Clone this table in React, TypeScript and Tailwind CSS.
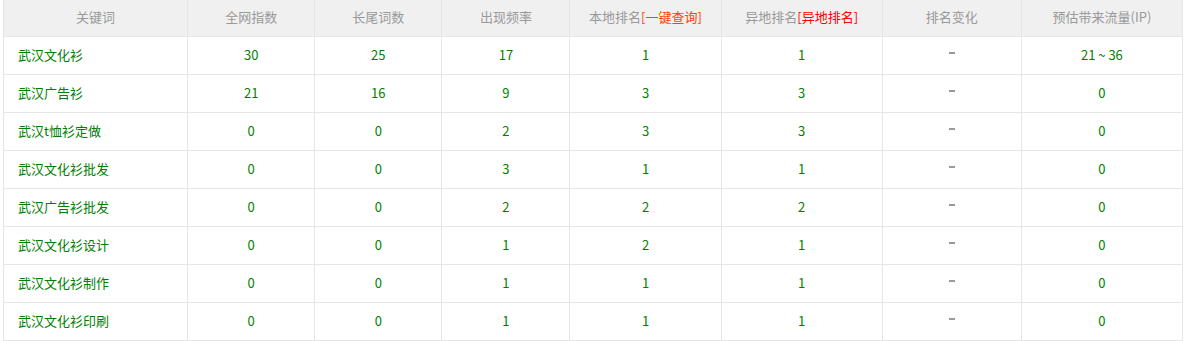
import React from "react";

const rows: [string, string, string, string, string, string, string][] = [
  ["武汉文化衫", "30", "25", "17", "1", "1", "21 ~ 36"],
  ["武汉广告衫", "21", "16", "9", "3", "3", "0"],
  ["武汉t恤衫定做", "0", "0", "2", "3", "3", "0"],
  ["武汉文化衫批发", "0", "0", "3", "1", "1", "0"],
  ["武汉广告衫批发", "0", "0", "2", "2", "2", "0"],
  ["武汉文化衫设计", "0", "0", "1", "2", "1", "0"],
  ["武汉文化衫制作", "0", "0", "1", "1", "1", "0"],
  ["武汉文化衫印刷", "0", "0", "1", "1", "1", "0"],
];

const widths = [185, 127, 127, 128, 151, 161, 139, 161];

export default function App() {
  return (
    <div
      className="bg-white w-[1184px] h-[341px] pl-[3px]"
      style={{ fontFamily: '"Noto Sans CJK SC", "Noto Sans", sans-serif' }}
    >
      <table className="table-fixed border-separate border-spacing-0 w-[1180px] text-[13px] leading-[18px]">
        <colgroup>
          {widths.map((w, i) => (
            <col key={i} style={{ width: w }} />
          ))}
        </colgroup>
        <thead>
          <tr className="bg-[#f0f0f0] text-[#999999]">
            <th className="h-[37px] font-normal border-l border-r border-b border-[#e6e6e6] pb-[2px]">关键词</th>
            <th className="h-[37px] font-normal border-r border-b border-[#e6e6e6] pb-[2px]">全网指数</th>
            <th className="h-[37px] font-normal border-r border-b border-[#e6e6e6] pb-[2px]">长尾词数</th>
            <th className="h-[37px] font-normal border-r border-b border-[#e6e6e6] pb-[2px]">出现频率</th>
            <th className="h-[37px] font-normal border-r border-b border-[#e6e6e6] pb-[2px]">
              本地排名<span className="text-[#ff4400]">[一键查询]</span>
            </th>
            <th className="h-[37px] font-normal border-r border-b border-[#e6e6e6] pb-[2px]">
              异地排名<span className="text-[#ff0000]">[异地排名]</span>
            </th>
            <th className="h-[37px] font-normal border-r border-b border-[#e6e6e6] pb-[2px]">排名变化</th>
            <th className="h-[37px] font-normal border-r border-b border-[#e6e6e6] pb-[2px]">预估带来流量(IP)</th>
          </tr>
        </thead>
        <tbody>
          {rows.map((r, i) => (
            <tr key={i} className="text-[#008000]">
              <td className="h-[38px] border-l border-r border-b border-[#e6e6e6] pl-[14px] pb-[2px] text-left">{r[0]}</td>
              <td className="h-[38px] border-r border-b border-[#e6e6e6] pb-[2px] text-center">{r[1]}</td>
              <td className="h-[38px] border-r border-b border-[#e6e6e6] pb-[2px] text-center">{r[2]}</td>
              <td className="h-[38px] border-r border-b border-[#e6e6e6] pb-[2px] text-center">{r[3]}</td>
              <td className="h-[38px] border-r border-b border-[#e6e6e6] pb-[2px] text-center">{r[4]}</td>
              <td className="h-[38px] border-r border-b border-[#e6e6e6] pb-[2px] text-center">{r[5]}</td>
              <td className="h-[38px] border-r border-b border-[#e6e6e6] pb-[2px] text-center">
                <span className="inline-block w-[6px] h-[2px] bg-[#999999] align-middle relative -top-[3px]"></span>
              </td>
              <td className="h-[38px] border-r border-b border-[#e6e6e6] pb-[2px] text-center">{r[6]}</td>
            </tr>
          ))}
        </tbody>
      </table>
    </div>
  );
}
